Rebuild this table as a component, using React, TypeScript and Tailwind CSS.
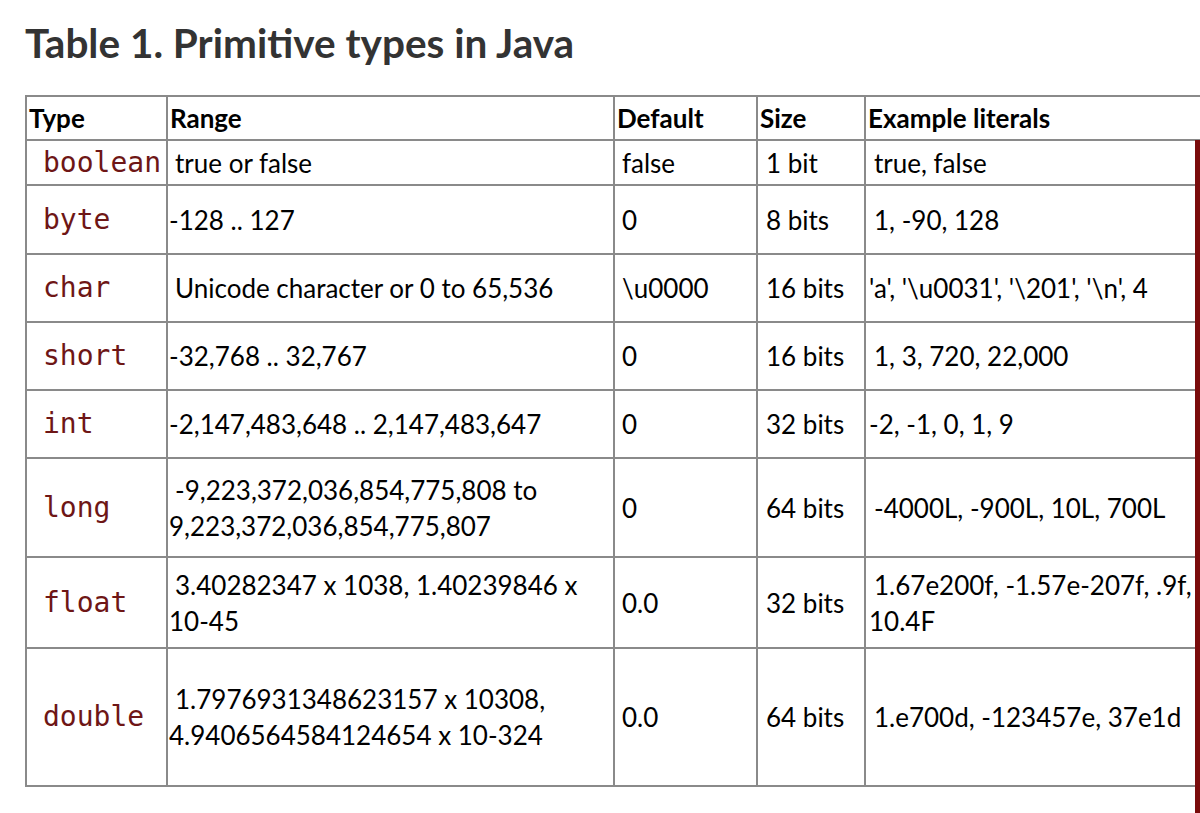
import React from 'react';

type Row = {
  type: string;
  range: React.ReactNode;
  def: string;
  size: string;
  example: React.ReactNode;
  h: string;
};

// leading space some cells carry in the original markup
const Sp = () => <span className="inline-block w-[6px]" />;
const Sx = () => <span className="inline-block w-[5px]" />;

const rows: Row[] = [
  { type: 'boolean', range: <><Sp />true or false</>, def: 'false', size: '1 bit', example: <><Sx />true, false</>, h: 'h-[45px]' },
  { type: 'byte', range: '-128 .. 127', def: '0', size: '8 bits', example: <><Sx />1, -90, 128</>, h: 'h-[69px]' },
  { type: 'char', range: <><Sp />Unicode character or 0 to 65,536</>, def: '\\u0000', size: '16 bits', example: "'a', '\\u0031', '\\201', '\\n', 4", h: 'h-[68px]' },
  { type: 'short', range: '-32,768 .. 32,767', def: '0', size: '16 bits', example: <><Sx />1, 3, 720, 22,000</>, h: 'h-[68px]' },
  { type: 'int', range: '-2,147,483,648 .. 2,147,483,647', def: '0', size: '32 bits', example: '-2, -1, 0, 1, 9', h: 'h-[68px]' },
  { type: 'long', range: <><Sp />-9,223,372,036,854,775,808 to 9,223,372,036,854,775,807</>, def: '0', size: '64 bits', example: <><Sx />-4000L, -900L, 10L, 700L</>, h: 'h-[99px]' },
  { type: 'float', range: <><Sp />3.40282347 x 1038, 1.40239846 x 10-45</>, def: '0.0', size: '32 bits', example: <><Sx />1.67e200f, -1.57e-207f, .9f, 10.4F</>, h: 'h-[91px]' },
  { type: 'double', range: <><Sp />1.7976931348623157 x 10308, 4.9406564584124654 x 10-324</>, def: '0.0', size: '64 bits', example: <><Sx />1.e700d, -123457e, 37e1d</>, h: 'h-[138px]' },
];

const cell = 'border-2 border-[#8a8a8a] align-middle text-left';

export default function App() {
  return (
    <div className="relative w-[1200px] h-[813px] overflow-hidden bg-white font-['Lato',sans-serif] text-black">
      <h1 className="pl-[25px] pt-[15px] h-[95px] text-[40.5px] font-bold leading-[56px] text-[#333]">
        Table 1. Primitive types in Java
      </h1>
      <table className="ml-[25px] table-fixed border-collapse text-[26px] leading-[36px] w-[1200px]">
        <colgroup>
          <col className="w-[141px]" />
          <col className="w-[447px]" />
          <col className="w-[143px]" />
          <col className="w-[108px]" />
          <col className="w-[361px]" />
        </colgroup>
        <thead>
          <tr className="h-[44px]">
            <th className={`${cell} pl-[2px] font-bold`}>Type</th>
            <th className={`${cell} pl-[2px] font-bold`}>Range</th>
            <th className={`${cell} pl-[2px] font-bold`}>Default</th>
            <th className={`${cell} pl-[2px] font-bold`}>Size</th>
            <th className={`${cell} pl-[2px] font-bold`}>Example literals</th>
          </tr>
        </thead>
        <tbody>
          {rows.map((r) => (
            <tr key={r.type} className={r.h}>
              <td className={`${cell} pl-[16px] font-['DejaVu_Sans_Mono',monospace] text-[28px] text-[#6e1616]`}>
                {r.type}
              </td>
              <td className={`${cell} pl-[1px] pr-[4px]`}>{r.range}</td>
              <td className={`${cell} pl-[7px]`}>{r.def}</td>
              <td className={`${cell} pl-[8px]`}>{r.size}</td>
              <td className={`${cell} pl-[3px] pr-[30px]`}>{r.example}</td>
            </tr>
          ))}
        </tbody>
      </table>
      <div className="absolute right-0 top-[140px] bottom-0 w-[5px] bg-[#7a0c0c]" />
    </div>
  );
}
